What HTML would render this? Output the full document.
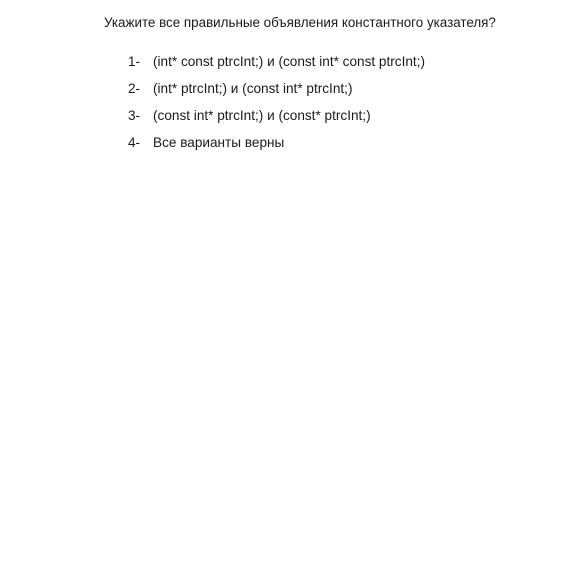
<!DOCTYPE html>
<html><head><meta charset="utf-8"><style>
html,body{margin:0;padding:0;background:#fff;width:575px;height:575px;overflow:hidden}
body{font-family:"Liberation Sans","DejaVu Sans",sans-serif;color:#1a1a1a;font-size:13.6px;position:relative}
.t{position:absolute;white-space:nowrap;line-height:15px}
</style></head><body>
<div class="t" style="left:104px;top:15px;font-size:13.4px">Укажите все правильные объявления константного указателя?</div>
<div class="t" style="left:128px;top:54px">1-</div><div class="t" style="left:153px;top:54px">(int* const ptrcInt;) и (const int* const ptrcInt;)</div>
<div class="t" style="left:128px;top:81px">2-</div><div class="t" style="left:153px;top:81px">(int* ptrcInt;) и (const int* ptrcInt;)</div>
<div class="t" style="left:128px;top:108px">3-</div><div class="t" style="left:153px;top:108px">(const int* ptrcInt;) и (const* ptrcInt;)</div>
<div class="t" style="left:128px;top:135px">4-</div><div class="t" style="left:153px;top:135px">Все варианты верны</div>
</body></html>
